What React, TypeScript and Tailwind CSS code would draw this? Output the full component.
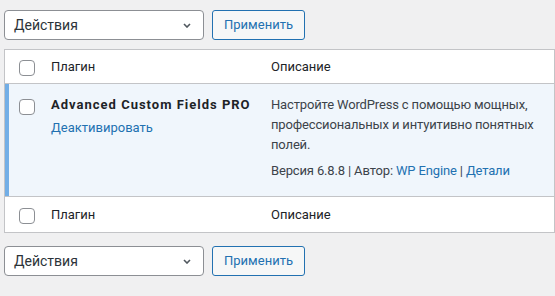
import React from 'react';

const Checkbox: React.FC = () => (
  <span className="block h-4 w-4 rounded-[4px] border border-[#8c8f94] bg-white" />
);

const BulkActions: React.FC = () => (
  <div className="flex items-center gap-2">
    <div className="flex h-[30px] w-[200px] items-center justify-between rounded-[4px] border border-[#8c8f94] bg-white pl-[9px] pr-[12px] text-[14px] text-[#2c3338]">
      <span>Действия</span>
      <svg width="8" height="5" viewBox="0 0 8 5" fill="none">
        <path d="M1 1l3 3 3-3" stroke="#50575e" strokeWidth="1.6" />
      </svg>
    </div>
    <button className="h-[30px] w-[93px] rounded-[3px] border border-[#2271b1] bg-[#f6f7f7] text-[13px] text-[#2271b1]">
      Применить
    </button>
  </div>
);

const HeadRow: React.FC<{ top?: boolean }> = ({ top }) => (
  <div className={`flex items-center ${top ? 'h-[34px] border-b' : 'h-[36px] border-t'} border-[#c3c4c7] text-[#1d2327]`}>
    <div className="flex w-[36px] justify-end pr-[6px] pt-[2px]">
      <Checkbox />
    </div>
    <div className="w-[220px] pl-[10px]">Плагин</div>
    <div className="pl-[10px]">Описание</div>
  </div>
);

export default function App() {
  return (
    <div
      className="min-h-[296px] w-[555px] bg-[#f0f0f1] pl-[4px] pt-[10px] text-[13px] text-[#3c434a]"
      style={{ fontFamily: 'Roboto, "Noto Sans", sans-serif' }}
    >
      <BulkActions />

      <div className="mt-[9px] border border-[#c3c4c7] bg-white">
        <HeadRow top />

        <div className="flex bg-[#f0f6fc] leading-[20px]">
          <div className="flex w-[36px] justify-end border-l-4 border-[#72aee6] pr-[6px] pt-[15px]">
            <Checkbox />
          </div>
          <div className="w-[220px] pl-[10px] pt-[11px]">
            <div className="font-bold tracking-[1px] text-[#1d2327]">Advanced Custom Fields PRO</div>
            <div className="mt-[3px] text-[#2271b1]">Деактивировать</div>
          </div>
          <div className="flex-1 pl-[10px] pr-[8px] pt-[11px] pb-[15px] tracking-[-0.15px]">
            <p>Настройте WordPress с помощью мощных, профессиональных и интуитивно понятных полей.</p>
            <p className="mt-[6px]">
              Версия 6.8.8 | Автор: <span className="text-[#2271b1]">WP Engine</span> |{' '}
              <span className="text-[#2271b1]">Детали</span>
            </p>
          </div>
        </div>

        <HeadRow />
      </div>

      <div className="mt-[13px]">
        <BulkActions />
      </div>
    </div>
  );
}
